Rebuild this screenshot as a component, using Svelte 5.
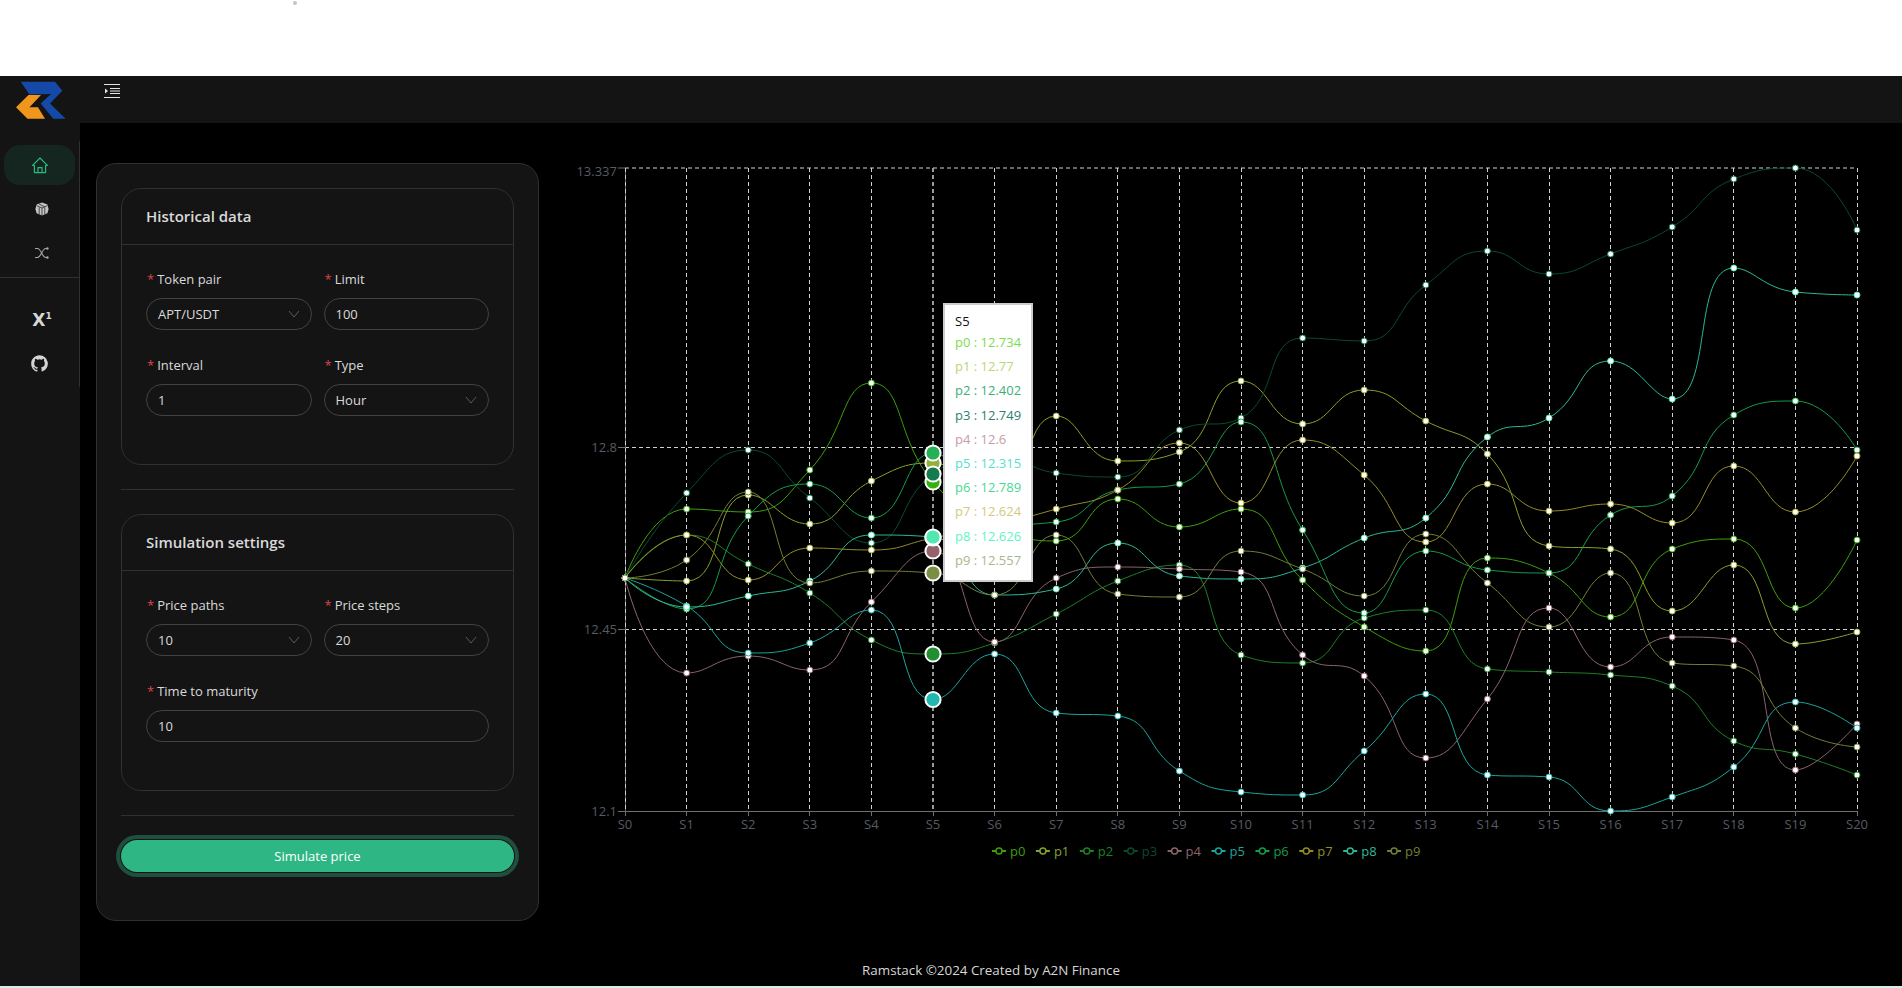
<script>
  const X0 = 625;
  const STEP = 61.6;
  const HOVER = 5;
  const steps = Array.from({ length: 21 }, (_, i) => i);
  const xAt = (i) => X0 + STEP * i;
  const gridX = (i) => Math.floor(xAt(i)) + 0.5;

  // y positions in page pixels, one per price step
  const series = [
    { name: 'p0', line: '#3d9f0b', big: '#39b012', tip: '#7cdc4c', value: '12.734', ys: [578,509,512,470,383,482,525,541,499,527,509,580,627,651,558,573,617,549,539,608,540] },
    { name: 'p1', line: '#87a02a', big: '#93b13a', tip: '#b6d87a', value: '12.77', ys: [578,581,495,524,481,463,510,416,461,452,381,424,390,421,454,546,549,611,565,644,632] },
    { name: 'p2', line: '#1c8126', big: '#1f8f30', tip: '#3cae78', value: '12.402', ys: [578,535,564,593,640,654,643,614,581,565,655,663,618,610,669,672,675,686,741,754,775] },
    { name: 'p3', line: '#0a4a2c', big: '#157a50', tip: '#2c7f70', value: '12.749', ys: [578,493,450,498,543,474,455,473,477,430,418,338,341,285,251,274,254,227,179,168,230] },
    { name: 'p4', line: '#8a646a', big: '#93626a', tip: '#c49ca4', value: '12.6', ys: [578,673,656,670,602,551,642,578,567,569,572,655,676,758,699,608,667,637,640,770,724] },
    { name: 'p5', line: '#1aa59e', big: '#20b8b0', tip: '#54e0d2', value: '12.315', ys: [578,606,653,643,610,699.5,654,713,716,771,792,795,751,694,775,777,811,797,767,702,728] },
    { name: 'p6', line: '#159c4a', big: '#25b055', tip: '#48d892', value: '12.789', ys: [578,609,516,484,518,453,525,522,490,484,422,530,613,551,570,573,515,496,415,401,450] },
    { name: 'p7', line: '#938d26', big: '#a8a532', tip: '#d2ca7c', value: '12.624', ys: [578,535,580,548,550,538,525,509,490,443,503,440,475,542,484,511,504,523,466,512,456] },
    { name: 'p8', line: '#2cb898', big: '#50e8b0', tip: '#62f4c2', value: '12.626', ys: [578,607,596,581,535,537,595,589,543,576,579,568,538,518,437,418,361,399,268,292,295] },
    { name: 'p9', line: '#6f8034', big: '#7a8f44', tip: '#a9b98a', value: '12.557', ys: [578,560,492,583,571,573,595,535,594,597,551,569,596,534,583,627,573,663,666,728,747] }
  ];

  const yTicks = [
    { label: '13.337', y: 168, textY: 171 },
    { label: '12.8', y: 447.5, textY: 447 },
    { label: '12.45', y: 629.5, textY: 629 },
    { label: '12.1', y: 811.5, textY: 811 }
  ];

  const clamp = (v, a, b) => Math.max(Math.min(a, b), Math.min(v, Math.max(a, b)));

  // same kind of curve the chart lib draws: tangents clamped so peaks stay flat
  function smoothPath(ys) {
    const k = 0.5;
    let d = `M${xAt(0)} ${ys[0]}`;
    let c1 = [xAt(0), ys[0]];
    for (let i = 1; i < ys.length; i++) {
      const x = xAt(i), y = ys[i];
      let c0 = [x, y], next = [x, y];
      if (i < ys.length - 1) {
        const dy = ys[i + 1] - ys[i - 1];
        const lenPrev = Math.hypot(STEP, y - ys[i - 1]);
        const lenNext = Math.hypot(STEP, ys[i + 1] - y);
        const ratio = lenNext / (lenNext + lenPrev);
        const dx = 2 * STEP;
        let nx = x + dx * k * ratio;
        let ny = clamp(y + dy * k * ratio, y, ys[i + 1]);
        const ddy = ny - y, ddx = nx - x;
        let px = x - ddx * lenPrev / lenNext;
        let py = clamp(y - ddy * lenPrev / lenNext, y, ys[i - 1]);
        nx = x + (x - px) * lenNext / lenPrev;
        ny = y + (y - py) * lenNext / lenPrev;
        c0 = [px, py];
        next = [nx, ny];
      }
      d += `C${c1[0].toFixed(1)} ${c1[1].toFixed(1)} ${c0[0].toFixed(1)} ${c0[1].toFixed(1)} ${x.toFixed(1)} ${y}`;
      c1 = next;
    }
    return d;
  }

  const sections = [
    {
      title: 'Historical data',
      fields: [
        { label: 'Token pair', value: 'APT/USDT', select: true },
        { label: 'Limit', value: '100' },
        { label: 'Interval', value: '1' },
        { label: 'Type', value: 'Hour', select: true }
      ]
    },
    {
      title: 'Simulation settings',
      fields: [
        { label: 'Price paths', value: '10', select: true },
        { label: 'Price steps', value: '20', select: true },
        { label: 'Time to maturity', value: '10', wide: true }
      ]
    }
  ];
</script>

<div class="page">
  <div class="topband"><span class="dot"></span></div>

  <header class="header">
    <div class="logo">
      <svg width="50" height="38" viewBox="16 81 50 38">
        <polygon fill="#1549a8" points="20.7,81.7 55,81.7 62.3,90.7 50,103.5 65.7,118.7 53.3,118.7 40.7,103.5 51,94 29.5,94.5" />
        <polygon fill="#f0961c" points="16,107.3 28.5,95 41,95 29.5,107.3 38,107.3 45,118.7 27.5,118.7" />
      </svg>
    </div>
    <svg class="fold" width="16" height="14" viewBox="0 0 16 14">
      <path d="M0 .5h16M0 13.5h16M6 4.5h10M6 7h10M6 9.5h10" stroke="#e4e4e4" fill="none" />
      <path d="M1 4.5v5L4 7z" fill="#e4e4e4" />
    </svg>
  </header>

  <div class="body">
    <aside class="sidebar">
      <nav class="menu">
        <div class="item active">
          <svg width="16" height="17" viewBox="0 0 16 17" fill="none" stroke="#2bb784" stroke-width="1.2">
            <path d="M8 1 15.4 8.4H13.6V15.6H2.4V8.4H.6z" stroke-linejoin="round" />
            <path d="M6 15.6V10.6H10V15.6" />
          </svg>
        </div>
        <div class="item nudge">
          <svg width="14" height="14" viewBox="0 0 14 14">
            <path d="M7 .4 12.4 2.6 13.6 7 12.4 11.2 7 13.6 1.6 11.2.4 7 1.6 2.6z" fill="#c4c4c4" />
            <path d="M1.6 3.6 7 6 12.4 3.6M7 6V13.6M4 2 9.6 4.8M4.2 5.4V12.4M9.8 5.4V12.4" stroke="#141414" stroke-width=".7" fill="none" />
          </svg>
        </div>
        <div class="item nudge">
          <svg width="14" height="14" viewBox="0 0 14 14" fill="none" stroke="#a8a8a8" stroke-width="1.1">
            <path d="M0 2.5H2.6C5.8 2.5 7.4 11.5 10.6 11.5H12M0 11.5H2.6C5.8 11.5 7.4 2.5 10.6 2.5H12" />
            <circle cx="12.4" cy="2.5" r="1.2" fill="#a8a8a8" stroke="none" />
            <circle cx="12.4" cy="11.5" r="1.2" fill="#a8a8a8" stroke="none" />
          </svg>
        </div>
        <div class="sep"></div>
        <div class="item x-one">X<sup>1</sup></div>
        <div class="item">
          <svg width="17" height="17" viewBox="0 0 24 24.5" fill="#d4d4d4">
            <path d="M12 .5C5.37.5 0 5.87 0 12.5c0 5.3 3.44 9.8 8.2 11.39.6.11.82-.26.82-.58v-2.03c-3.34.73-4.04-1.61-4.04-1.61-.55-1.39-1.34-1.76-1.34-1.76-1.09-.75.08-.73.08-.73 1.2.08 1.84 1.24 1.84 1.24 1.07 1.84 2.81 1.3 3.5 1 .1-.78.42-1.31.76-1.61-2.67-.3-5.47-1.33-5.47-5.93 0-1.31.47-2.38 1.24-3.22-.14-.3-.54-1.52.1-3.18 0 0 1.01-.32 3.3 1.23a11.5 11.5 0 0 1 6 0c2.29-1.55 3.31-1.23 3.31-1.23.64 1.66.24 2.88.12 3.18a4.65 4.65 0 0 1 1.23 3.22c0 4.61-2.8 5.63-5.48 5.92.43.37.81 1.1.81 2.22v3.29c0 .32.22.7.82.58A12 12 0 0 0 12 .5z" />
          </svg>
        </div>
      </nav>
    </aside>

    <main class="main">
      <div class="content">
        <form class="card" onsubmit={(e) => e.preventDefault()}>
          {#each sections as section}
            <section class="section">
              <h3>{section.title}</h3>
              <div class="fields">
                {#each section.fields as field}
                  <div class="field" class:wide={field.wide}>
                    <span class="label"><i>*</i>{field.label}</span>
                    {#if field.select}
                      <div class="control select">
                        <span>{field.value}</span>
                        <svg width="12" height="8" viewBox="0 0 12 8" fill="none" stroke="#5c5c5c" stroke-width="1">
                          <path d="M1 1 6 7 11 1" />
                        </svg>
                      </div>
                    {:else}
                      <input class="control" value={field.value} />
                    {/if}
                  </div>
                {/each}
              </div>
            </section>
            <hr />
          {/each}
          <button type="submit">Simulate price</button>
        </form>

        <div class="chart">
          <svg width="1363" height="758" viewBox="539 163 1363 758">
            {#each yTicks as t, i}
              {#if i < 3}
                <line class="grid" x1={X0} x2="1857" y1={t.y} y2={t.y} />
              {/if}
              <line class="axis" x1={X0 - 7} x2={X0} y1={t.y} y2={t.y} />
              <text class="tick" x="617" y={t.textY} text-anchor="end" dominant-baseline="central">{t.label}</text>
            {/each}
            <line class="axis" x1={X0 + 0.5} x2={X0 + 0.5} y1="168" y2="811" />
            {#each steps as i}
              <line class="grid" x1={gridX(i)} x2={gridX(i)} y1="168" y2="811" />
              <line class="axis" x1={gridX(i)} x2={gridX(i)} y1="811" y2="816" />
              <text class="tick" x={xAt(i)} y="824" text-anchor="middle" dominant-baseline="central">S{i}</text>
            {/each}
            <line class="axis" x1={X0} x2="1857" y1="811.5" y2="811.5" />
            <line class="pointer" x1={Math.round(xAt(HOVER))} x2={Math.round(xAt(HOVER))} y1="168" y2="811" />

            {#each series as s}
              <path d={smoothPath(s.ys)} fill="none" stroke={s.line} stroke-width="1" />
            {/each}
            {#each series as s}
              {#each s.ys as y, i}
                {#if i === HOVER}
                  <circle cx={xAt(i)} cy={y} r="7.6" fill={s.big} stroke="#fff" stroke-width="2" />
                {:else}
                  <circle cx={xAt(i)} cy={y} r="3" fill="#fff" stroke={s.big} stroke-width="1" />
                {/if}
              {/each}
            {/each}

            {#each series as s, i}
              <line x1={992 + 43.9 * i} x2={1006 + 43.9 * i} y1="851" y2="851" stroke={s.line} stroke-width="2" />
              <circle cx={999 + 43.9 * i} cy="851" r="3" fill="#000" stroke={s.line} stroke-width="1.5" />
              <text class="legend" x={1010 + 43.9 * i} y="850.5" fill={s.line} dominant-baseline="central">{s.name}</text>
            {/each}
          </svg>

          <div class="tooltip">
            <div class="tip-title">S5</div>
            {#each series as s}
              <div class="tip-row" style:color={s.tip}>{s.name} : {s.value}</div>
            {/each}
          </div>
        </div>
      </div>
      <footer class="footer">Ramstack ©2024 Created by A2N Finance</footer>
    </main>
  </div>
  <div class="edge"></div>
</div>

<style>
  :global(body) {
    margin: 0;
    background: #000;
  }

  .page {
    display: flex;
    flex-direction: column;
    height: 988px;
    overflow: hidden;
    font-family: 'Open Sans', 'Noto Sans', sans-serif;
    font-size: 13px;
    color: rgba(255, 255, 255, 0.85);
  }

  .topband {
    height: 76px;
    background: #fff;
    padding-left: 293px;
    box-sizing: border-box;
    flex: none;
  }

  .dot {
    display: block;
    width: 4px;
    height: 4px;
    margin-top: 1px;
    border-radius: 50%;
    background: #c4c4c4;
  }

  .header {
    display: flex;
    height: 47px;
    flex: none;
    background: #141414;
  }

  .logo {
    width: 64px;
    padding: 5px 0 0 16px;
    box-sizing: content-box;
  }

  .logo svg {
    display: block;
  }

  .fold {
    margin: 8px 0 0 24px;
  }

  .body {
    display: flex;
    flex: 1;
    min-height: 0;
  }

  .sidebar {
    width: 80px;
    flex: none;
    background: #141414;
    padding-top: 18px;
    box-sizing: border-box;
  }

  .menu {
    height: 246px;
    box-sizing: border-box;
    border-right: 1px solid #303030;
    padding-top: 4px;
  }

  .item {
    display: flex;
    align-items: center;
    justify-content: center;
    height: 40px;
    margin: 0 4px 4px;
    border-radius: 16px;
  }

  .item.active {
    background: #14261f;
  }

  .nudge svg {
    margin-left: 5px;
  }

  .x-one {
    padding: 2px 0 0 5px;
    font-family: 'DejaVu Sans', sans-serif;
    font-weight: 700;
    font-size: 17px;
    color: #d8d8d8;
    box-sizing: border-box;
  }

  .x-one sup {
    font-size: 9px;
    line-height: 0;
    margin-top: -8px;
  }

  .sep {
    height: 1px;
    background: #303030;
    margin: 0 -1px 21px 0;
  }

  .main {
    flex: 1;
    display: flex;
    flex-direction: column;
    min-width: 0;
    background: #000;
  }

  .content {
    display: flex;
    padding: 40px 0 0 16px;
  }

  .card {
    width: 443px;
    height: 758px;
    flex: none;
    box-sizing: border-box;
    padding: 24px;
    background: #141414;
    border: 1px solid #303030;
    border-radius: 20px;
    margin: 0;
  }

  .section {
    border: 1px solid #303030;
    border-radius: 20px;
  }

  h3 {
    margin: 0;
    height: 56px;
    box-sizing: border-box;
    padding-left: 24px;
    line-height: 55px;
    font-size: 15px;
    font-weight: 600;
    border-bottom: 1px solid #303030;
  }

  .fields {
    display: grid;
    grid-template-columns: 1fr 1fr;
    column-gap: 12px;
    padding: 23px 24px 24px;
  }

  .field {
    display: flex;
    flex-direction: column;
    min-width: 0;
    margin-bottom: 24px;
  }

  .field.wide {
    grid-column: 1 / 3;
  }

  .label {
    height: 30px;
    line-height: 22px;
  }

  .label i {
    font-style: normal;
    color: #dc4446;
    margin: 0 3px 0 1px;
  }

  .control {
    height: 32px;
    box-sizing: border-box;
    width: 100%;
    padding: 0 11px;
    border: 1px solid #424242;
    border-radius: 16px;
    background: transparent;
    font: inherit;
    color: inherit;
    outline: none;
  }

  .select {
    display: flex;
    align-items: center;
    justify-content: space-between;
  }

  hr {
    height: 1px;
    margin: 24px 0;
    border: 0;
    background: #303030;
  }

  button {
    display: block;
    width: 100%;
    height: 32px;
    border: 0;
    border-radius: 16px;
    background: #2eb785;
    color: #fff;
    font: inherit;
    box-shadow: 0 0 0 1px #141414, 0 0 0 5px #1f4f3d;
  }

  .chart {
    position: relative;
    flex: 1;
    min-width: 0;
  }

  .chart svg {
    display: block;
  }

  .grid {
    stroke: #cfcfcf;
    stroke-dasharray: 4 3;
  }

  .axis {
    stroke: #6e6e6e;
  }

  .pointer {
    stroke: #9a9a9a;
    stroke-width: 2;
    stroke-dasharray: 4 3;
  }

  .tick {
    font-size: 13px;
    fill: #575b63;
  }

  .legend {
    font-size: 13px;
  }

  .tooltip {
    position: absolute;
    left: 404px;
    top: 140px;
    width: 90px;
    height: 279px;
    box-sizing: border-box;
    padding: 8px 0 8px 10px;
    background: #fff;
    border: 2px solid #ccc;
    white-space: nowrap;
  }

  .tip-title {
    height: 17px;
    line-height: 17px;
    color: #111;
  }

  .tip-row {
    height: 24.2px;
    line-height: 24.2px;
  }

  .footer {
    padding-top: 38px;
    line-height: 22px;
    font-size: 13.4px;
    text-align: center;
    color: rgba(255, 255, 255, 0.85);
  }

  .edge {
    height: 2px;
    flex: none;
    background: #d5efe6;
  }
</style>
